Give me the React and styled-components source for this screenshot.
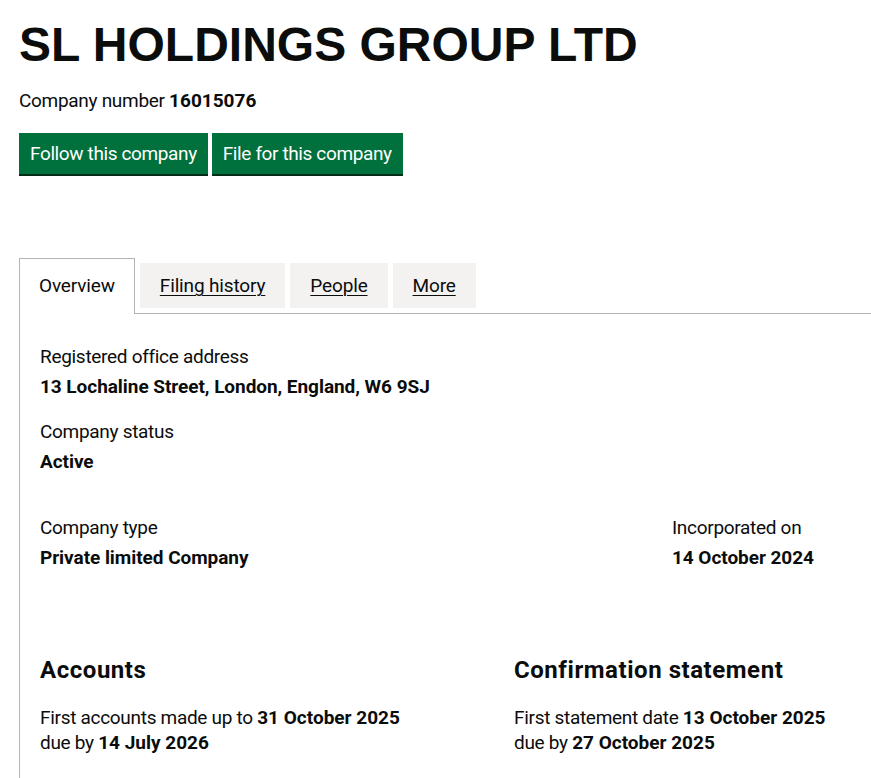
import React from "react";
import styled, { createGlobalStyle } from "styled-components";

const Global = createGlobalStyle`
  html, body { margin: 0; padding: 0; background: #fff; overflow-x: hidden; }
  body { font-family: Roboto, "Liberation Sans", Arial, sans-serif; color: #0b0c0c; letter-spacing: -0.3px; }
  strong { font-weight: 700; letter-spacing: 0; }
  * { box-sizing: border-box; }
`;

const Page = styled.main`
  width: 1000px;
  padding: 20px 0 40px 19px;
`;

const Title = styled.h1`
  margin: 0;
  font-family: "Liberation Sans", Arial, sans-serif;
  font-weight: 700;
  font-size: 48px;
  line-height: 50px;
  letter-spacing: 0;
`;

const Meta = styled.p`
  margin: 18px 0 20px;
  font-size: 19px;
  line-height: 25px;
`;

const Actions = styled.div`
  display: flex;
  gap: 4px;
`;

const Button = styled.button`
  font-family: inherit;
  font-size: 19px;
  line-height: 25px;
  letter-spacing: -0.38px;
  color: #fff;
  background: #00703c;
  border: 0;
  border-radius: 0;
  padding: 8px 11px 8px;
  box-shadow: 0 2px 0 #002d18;
  margin-bottom: 2px;
  cursor: pointer;
`;

const Tabs = styled.section`
  margin-top: 87px;
`;

const TabList = styled.ul`
  list-style: none;
  margin: 0;
  padding: 0;
  display: flex;
  align-items: flex-end;
  border-bottom: 1px solid #b1b4b6;
  width: 920px;
`;

const Tab = styled.li`
  margin-right: 5px;
  font-size: 19px;
  line-height: 25px;
  letter-spacing: -0.15px;
  ${(p) =>
    p.$selected
      ? `
    margin-top: -5px;
    margin-bottom: -1px;
    padding: 14px 19px 16px;
    border: 1px solid #b1b4b6;
    border-bottom: 0;
    background: #fff;
  `
      : `
    padding: 10px 20px;
    background: #f3f2f1;
    margin-bottom: 5px;
  `}
`;

const TabLink = styled.a`
  color: #0b0c0c;
  text-decoration: ${(p) => (p.$selected ? "none" : "underline")};
  text-underline-offset: 3px;
  text-decoration-thickness: 1px;
  cursor: pointer;
`;

const Panel = styled.div`
  border: 1px solid #b1b4b6;
  border-top: 0;
  padding: 30px 20px 30px;
  width: 920px;
`;

const Row = styled.div`
  display: grid;
  grid-template-columns: ${(p) => p.$cols || "1fr"};
  margin-bottom: ${(p) => p.$gap || "20px"};
`;

const Field = styled.dl`
  margin: 0;
  font-size: 19px;
  line-height: 25px;
`;

const Label = styled.dt`
  margin: 0 0 5px;
`;

const Value = styled.dd`
  margin: 0;
  font-weight: 700;
  letter-spacing: -0.05px;
`;

const Heading = styled.h2`
  margin: 0 0 20px;
  font-size: 24px;
  line-height: 30px;
  font-weight: 700;
  letter-spacing: 0.55px;
`;

const Text = styled.p`
  margin: 0;
  font-size: 19px;
  line-height: 25px;
`;

const tabs = ["Overview", "Filing history", "People", "More"];

export default function App() {
  return (
    <>
      <Global />
      <Page>
        <Title>SL HOLDINGS GROUP LTD</Title>
        <Meta>
          Company number <strong>16015076</strong>
        </Meta>
        <Actions>
          <Button>Follow this company</Button>
          <Button>File for this company</Button>
        </Actions>
        <Tabs>
          <TabList>
            {tabs.map((t, i) => (
              <Tab key={t} $selected={i === 0}>
                <TabLink $selected={i === 0}>{t}</TabLink>
              </Tab>
            ))}
          </TabList>
          <Panel>
            <Row>
              <Field>
                <Label>Registered office address</Label>
                <Value>13 Lochaline Street, London, England, W6 9SJ</Value>
              </Field>
            </Row>
            <Row $gap="41px">
              <Field>
                <Label>Company status</Label>
                <Value>Active</Value>
              </Field>
            </Row>
            <Row $cols="632px 1fr" $gap="85px">
              <Field>
                <Label>Company type</Label>
                <Value>Private limited Company</Value>
              </Field>
              <Field>
                <Label>Incorporated on</Label>
                <Value>14 October 2024</Value>
              </Field>
            </Row>
            <Row $cols="474px 1fr">
              <div>
                <Heading>Accounts</Heading>
                <Text>
                  First accounts made up to <strong>31 October 2025</strong>
                  <br />
                  due by <strong>14 July 2026</strong>
                </Text>
              </div>
              <div>
                <Heading>Confirmation statement</Heading>
                <Text>
                  First statement date <strong>13 October 2025</strong>
                  <br />
                  due by <strong>27 October 2025</strong>
                </Text>
              </div>
            </Row>
          </Panel>
        </Tabs>
      </Page>
    </>
  );
}
